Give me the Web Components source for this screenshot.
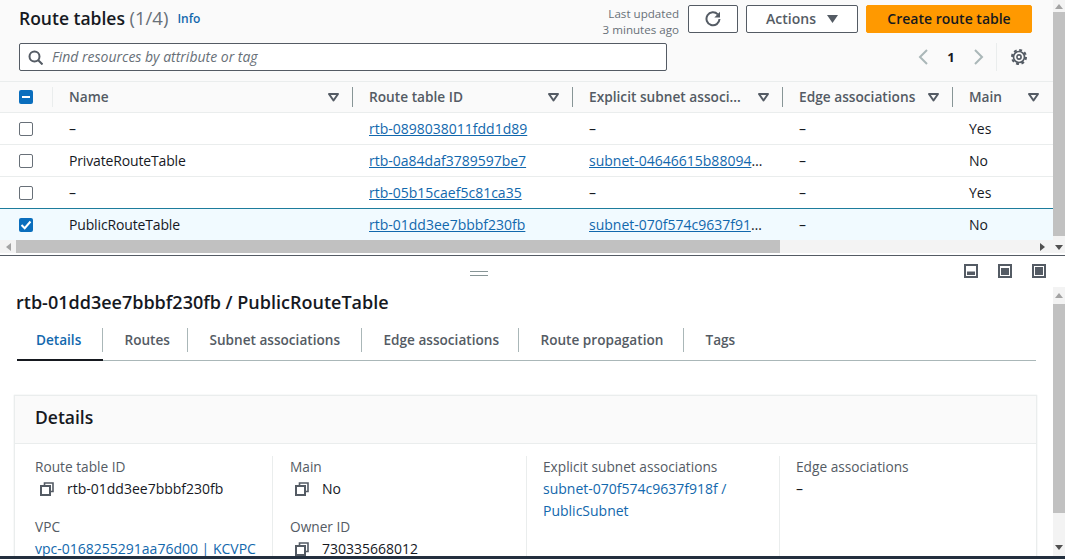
<!DOCTYPE html>
<html>
<head>
<meta charset="utf-8">
<title>Route tables</title>
<style>
  html, body { margin: 0; height: 100%; overflow: hidden; background: #fff; }
  body { font: 14px/20px "Open Sans", "Noto Sans", sans-serif; color: #16191f; }
</style>
</head>
<body>
<route-console>
  <top-pane slot="top">
    <route-header></route-header>
    <route-head-row></route-head-row>
    <route-row rtb="rtb-0898038011fdd1d89" main="Yes"></route-row>
    <route-row name="PrivateRouteTable" rtb="rtb-0a84daf3789597be7" subnet="subnet-04646615b88094a1c" clip="16" main="No"></route-row>
    <route-row rtb="rtb-05b15caef5c81ca35" main="Yes"></route-row>
    <route-row name="PublicRouteTable" rtb="rtb-01dd3ee7bbbf230fb" subnet="subnet-070f574c9637f918f" clip="21" main="No" selected></route-row>
  </top-pane>
  <split-bar slot="split"></split-bar>
  <bottom-pane slot="bottom">
    <tab-strip></tab-strip>
    <details-card>
      <detail-col pad="20">
        <detail-item label="Route table ID" value="rtb-01dd3ee7bbbf230fb" copy></detail-item>
        <detail-item label="VPC" value="vpc-0168255291aa76d00 | KCVPC" link></detail-item>
      </detail-col>
      <detail-col pad="17">
        <detail-item label="Main" value="No" copy></detail-item>
        <detail-item label="Owner ID" value="730335668012" copy></detail-item>
      </detail-col>
      <detail-col pad="16">
        <detail-item label="Explicit subnet associations" value="subnet-070f574c9637f918f / PublicSubnet" link></detail-item>
      </detail-col>
      <detail-col pad="16" last>
        <detail-item label="Edge associations" value="–"></detail-item>
      </detail-col>
    </details-card>
  </bottom-pane>
</route-console>

<script>
(function () {
  const FONT = `"Open Sans", "Noto Sans", sans-serif`;
  const LINK = "#1268ad";
  const COLS = "53px 300px 220px 210px 170px 100px";

  const sortIcon = `<svg width="11" height="9" viewBox="0 0 11 9"><path d="M1 1h9L5.5 7.500z" fill="none" stroke="#545b64" stroke-width="2" stroke-linejoin="round"/></svg>`;
  const copyIcon = `<svg width="14" height="14" viewBox="0 0 14 14" fill="none" stroke="#545b64"><path d="M4.500 4V1h8.500v8.500h-3" stroke-width="1.600"/><rect x="1" y="4" width="9" height="9" stroke-width="2"/></svg>`;

  function define(name, html) {
    customElements.define(name, class extends HTMLElement {
      constructor() {
        super();
        this.attachShadow({ mode: "open" });
      }
      connectedCallback() {
        this.shadowRoot.innerHTML = typeof html === "function" ? html(this) : html;
      }
    });
  }

  define("route-console", `
    <style>
      :host { display: flex; flex-direction: column; width: 1065px; height: 559px; overflow: hidden; }
      .bar { height: 3px; background: #232f3e; flex: none; }
    </style>
    <slot name="top"></slot>
    <slot name="split"></slot>
    <slot name="bottom"></slot>
    <div class="bar"></div>
  `);

  define("v-scroll", h => `
    <style>
      :host { display: flex; flex-direction: column; width: 12px; flex: none; background: #f3f3f3; margin-bottom: ${h.getAttribute("gap") || 0}px; }
      .arrow { height: ${h.getAttribute("arrow")}px; flex: none; display: flex; align-items: center; justify-content: center; }
      .thumb { background: #c1c1c1; flex: none; height: ${h.getAttribute("thumb")}px; }
      .rest { flex: 1; }
    </style>
    <div class="arrow"><svg width="8" height="5"><path d="M4 0l4 5H0z" fill="#a3a3a3"/></svg></div>
    <div class="thumb"></div>
    <div class="rest"></div>
    <div class="arrow"><svg width="8" height="5"><path d="M4 5L8 0H0z" fill="#505050"/></svg></div>
  `);

  define("top-pane", `
    <style>
      :host { display: flex; height: 255px; flex: none; background: #fff; border-bottom: 1px solid #545b64; box-sizing: content-box; }
      .main { width: 1053px; flex: none; display: flex; flex-direction: column; }
      .rows { flex: 1; overflow: hidden; }
      .hbar { height: 13px; flex: none; margin-bottom: 2px; background: #f3f3f3; display: flex; align-items: center; }
      .hbar .a { width: 16px; flex: none; display: flex; justify-content: center; }
      .hbar .t { width: 764px; height: 13px; background: #c1c1c1; flex: none; }
      .hbar .r { flex: 1; display: flex; justify-content: flex-end; padding-right: 8px; }
    </style>
    <div class="main">
      <div class="rows"><slot></slot></div>
      <div class="hbar">
        <div class="a"><svg width="5" height="8"><path d="M0 4l5-4v8z" fill="#a3a3a3"/></svg></div>
        <div class="t"></div>
        <div class="r"><svg width="5" height="8"><path d="M5 4L0 0v8z" fill="#505050"/></svg></div>
      </div>
    </div>
    <v-scroll thumb="224" arrow="12" gap="2"></v-scroll>
  `);

  define("route-header", `
    <style>
      :host { display: block; height: 81px; box-sizing: border-box; background: #fafafa; padding: 5px 21px 0 19px; font-family: ${FONT}; }
      .r1 { display: flex; align-items: flex-start; height: 38px; }
      h1 { margin: 0; font-size: 17.500px; line-height: 26px; font-weight: 600; color: #16191f; }
      h1 span { font-weight: 400; font-size: 18.500px; color: #687078; }
      .info { font-size: 12px; font-weight: 600; color: ${LINK}; margin-left: 9px; line-height: 28px; }
      .upd { margin-left: auto; text-align: right; font-size: 11.600px; line-height: 16px; color: #687078; margin-top: 1px; margin-right: 9px; }
      .btn { height: 28px; box-sizing: border-box; border: 1px solid #545b64; border-radius: 2px; background: #fff; display: flex; align-items: center; justify-content: center;
             font-size: 14px; font-weight: 600; color: #545b64; }
      .refresh { width: 50px; margin-right: 8px; }
      .actions { width: 112px; margin-right: 8px; gap: 11px; }
      .create { width: 166px; background: #ff9900; border-color: #ff9900; color: #16191f; }
      .r2 { display: flex; align-items: center; height: 28px; }
      .search { width: 648px; height: 28px; box-sizing: border-box; border: 1px solid #545b64; border-radius: 2px; background: #fff; display: flex; align-items: center; gap: 9px; padding-left: 8px;
                font-style: italic; font-size: 14px; color: #687078; }
      .pager { margin-left: auto; margin-right: 5px; display: flex; align-items: center; height: 28px; color: #16191f; font-weight: 700; font-size: 13px; }
      .pager .one { width: 18px; text-align: center; margin: 0 14px; }
      .sep { width: 1px; height: 28px; background: #eaeded; margin: 0 14px 0 12px; }
    </style>
    <div class="r1">
      <h1>Route tables <span>(1/4)</span></h1>
      <div class="info">Info</div>
      <div class="upd">Last updated<br>3 minutes ago</div>
      <div class="btn refresh"><svg width="16" height="16" viewBox="0 0 16 16" fill="none" stroke="#545b64" stroke-width="2"><path d="M12.800 3.400A6.500 6.500 0 1 0 14.500 8"/><path d="M15 .8V6.500H9.300z" fill="#545b64" stroke="none"/></svg></div>
      <div class="btn actions">Actions <svg width="11" height="8"><path d="M0 0h11L5.500 8z" fill="#545b64"/></svg></div>
      <div class="btn create">Create route table</div>
    </div>
    <div class="r2">
      <div class="search">
        <svg width="15" height="15" viewBox="0 0 15 15" fill="none" stroke="#545b64" stroke-width="2"><circle cx="6.500" cy="6.500" r="5"/><path d="M10 10l4.500 4.500"/></svg>
        Find resources by attribute or tag
      </div>
      <div class="pager">
        <svg width="10" height="16" viewBox="0 0 10 16" fill="none" stroke="#aab7b8" stroke-width="2"><path d="M9 1L2 8l7 7"/></svg>
        <div class="one">1</div>
        <svg width="10" height="16" viewBox="0 0 10 16" fill="none" stroke="#aab7b8" stroke-width="2"><path d="M1 1l7 7-7 7"/></svg>
        <div class="sep"></div>
        <svg width="16" height="16" viewBox="0 0 16 16" fill="none" stroke="#545b64"><circle cx="8" cy="8" r="5.500" stroke-width="1.700"/><circle cx="8" cy="8" r="7" stroke-width="2" stroke-dasharray="2.900 2.600"/><circle cx="8" cy="8" r="2.100" stroke-width="1.600"/></svg>
      </div>
    </div>
  `);

  define("check-box", h => {
    const state = h.getAttribute("state");
    const on = state === "on" || state === "mixed";
    const mark = state === "on"
      ? `<svg width="14" height="14" viewBox="0 0 14 14"><path d="M2.500 7l3.200 3.200L11.500 3.500" fill="none" stroke="#fff" stroke-width="2"/></svg>`
      : state === "mixed" ? `<svg width="14" height="14" viewBox="0 0 14 14"><path d="M3 7h8" stroke="#fff" stroke-width="2"/></svg>` : "";
    return `
      <style>
        :host { display: inline-flex; box-sizing: border-box; width: 14px; height: 14px; border: ${on ? "0 solid" : "1px solid #687078"}; border-radius: 2px; background: ${on ? "#0a6ebd" : "#fff"}; align-items: center; justify-content: center; }
      </style>${mark}`;
  });

  const rowStyle = `
    :host { display: grid; grid-template-columns: ${COLS}; box-sizing: border-box; font-family: ${FONT}; align-items: center; }
    .c { padding-left: 16px; overflow: hidden; white-space: nowrap; text-overflow: ellipsis; min-width: 0; }
    .box { padding-left: 19px; display: flex; }
  `;

  define("route-head-row", () => {
    const heads = ["Name", "Route table ID", "Explicit subnet associ...", "Edge associations", "Main"];
    return `
      <style>${rowStyle}
        :host { height: 32px; background: #fafafa; border-top: 1px solid #eaeded; border-bottom: 1px solid #eaeded; font-size: 13.700px; font-weight: 600; color: #545b64; }
        .box { height: 20px; align-items: center; border-right: 1px solid #eaeded; box-sizing: border-box; }
        .h { display: flex; align-items: center; justify-content: space-between; height: 20px; padding: 0 13px 0 16px; border-right: 1px solid #879596; }
        .h.end { border-right: 0; padding-right: 14px; }
      </style>
      <div class="box"><check-box state="mixed"></check-box></div>
      ${heads.map((t, i) => `<div class="h ${i === 4 ? "end" : ""}"><span>${t}</span>${sortIcon}</div>`).join("")}
    `;
  });

  define("route-row", h => {
    const sel = h.hasAttribute("selected");
    const name = h.getAttribute("name") || "–";
    const subnet = h.getAttribute("subnet");
    return `
      <style>${rowStyle}
        :host { height: 32px; border-bottom: 1px solid #eaeded; background: ${sel ? "#f1faff" : "#fff"}; ${sel ? "border-top: 1px solid #1c7c9c; margin-top: -1px; border-bottom: 0;" : ""} font-size: 14px; color: #16191f; }
        a { color: ${LINK}; text-decoration: underline; }
        .n { letter-spacing: -0.15px; }
      </style>
      <div class="box"><check-box state="${sel ? "on" : "off"}"></check-box></div>
      <div class="c n">${name}</div>
      <div class="c"><a>${h.getAttribute("rtb")}</a></div>
      <div class="c" style="padding-right:${h.getAttribute("clip") || 16}px">${subnet ? `<a>${subnet}</a>` : "–"}</div>
      <div class="c">–</div>
      <div class="c">${h.getAttribute("main")}</div>
    `;
  });

  define("split-bar", () => {
    const icon = (y, height) => `<svg width="14" height="14" viewBox="0 0 14 14"><rect x="1" y="1" width="12" height="12" fill="#fff" stroke="#545b64" stroke-width="2"/><rect x="3" y="${y}" width="8" height="${height}" fill="#545b64"/></svg>`;
    return `
    <style>
      :host { display: flex; flex: none; height: 31px; align-items: center; background: #fff; }
      .grip { margin-left: 470px; width: 18px; height: 3px; border-top: 1px solid #879596; border-bottom: 1px solid #879596; margin-top: 3px; }
      .icons { margin-left: auto; margin-right: 19px; display: flex; gap: 20px; margin-top: -2px; }
      svg { display: block; }
    </style>
    <div class="grip"></div>
    <div class="icons">
      ${icon(7.5, 3.5)}${icon(4, 7)}${icon(3, 8)}
    </div>
  `;
  });

  define("bottom-pane", `
    <style>
      :host { display: flex; flex: 1; min-height: 0; overflow: hidden; font-family: ${FONT}; background: #fff; }
      .main { width: 1053px; flex: none; overflow: hidden; }
      h2 { margin: 4px 0 0 16px; font-size: 18px; line-height: 22px; font-weight: 600; color: #16191f; }
    </style>
    <div class="main">
      <h2>rtb-01dd3ee7bbbf230fb / PublicRouteTable</h2>
      <slot></slot>
    </div>
    <v-scroll thumb="209" arrow="17"></v-scroll>
  `);

  define("tab-strip", () => {
    const tabs = [["Details", 86], ["Routes", 85], ["Subnet associations", 174], ["Edge associations", 157], ["Route propagation", 165], ["Tags", 0]];
    return `
      <style>
        :host { display: flex; margin: 15px 17px 0 17px; height: 32px; border-bottom: 1px solid #aab7b8; font-size: 13.600px; font-weight: 600; color: #545b64; box-sizing: content-box; }
        .t { height: 24px; display: flex; align-items: center; padding-left: 21.500px; box-sizing: border-box; border-right: 1px solid #aab7b8; white-space: nowrap; }
        .wrap { height: 32px; box-sizing: border-box; }
        .wrap:last-child .t { border-right: 0; }
        .on { color: ${LINK}; padding-left: 19px; }
        .wrap.sel { border-bottom: 2px solid #16191f; height: 33px; }
      </style>
      ${tabs.map(([t, w], i) => `<div class="wrap ${i === 0 ? "sel" : ""}" style="${w ? `width:${w}px` : ""}"><div class="t ${i === 0 ? "on" : ""}">${t}</div></div>`).join("")}
    `;
  });

  define("details-card", `
    <style>
      :host { display: block; margin: 34px 16px 0 14px; border: 1px solid #eaeded; border-bottom: 0; font-family: ${FONT}; height: 180px; box-shadow: 0 0 1px #d5dbdb; }
      .head { height: 47px; box-sizing: content-box; height: 42px; padding: 0 0 5px 20px; background: #fafafa; border-bottom: 1px solid #eaeded; display: flex; align-items: center; font-size: 17.500px; font-weight: 600; color: #16191f; }
      .cols { display: grid; grid-template-columns: 258px 254px 253px 1fr; padding-top: 12px; }
    </style>
    <div class="head">Details</div>
    <div class="cols"><slot></slot></div>
  `);

  define("detail-col", h => `
    <style>
      :host { display: flex; flex-direction: column; gap: 16px; height: 120px; padding: 0 16px 0 ${h.getAttribute("pad")}px; box-sizing: border-box; ${h.hasAttribute("last") ? "" : "border-right: 1px solid #eaeded;"} }
    </style>
    <slot></slot>
  `);

  define("detail-item", h => {
    const value = h.getAttribute("value");
    const copy = h.hasAttribute("copy");
    const link = h.hasAttribute("link");
    return `
      <style>
        :host { display: block; font-family: ${FONT}; font-size: 14px; line-height: 22px; }
        .l { color: #545b64; font-size: 13.700px; }
        .v { color: ${link ? LINK : "#16191f"}; display: flex; gap: 13px; align-items: center; }
        .v.copy { padding-left: 5px; }
      </style>
      <div class="l">${h.getAttribute("label")}</div>
      <div class="v ${copy ? "copy" : ""}">${copy ? copyIcon : ""}<span>${value}</span></div>
    `;
  });
})();
</script>
</body>
</html>
